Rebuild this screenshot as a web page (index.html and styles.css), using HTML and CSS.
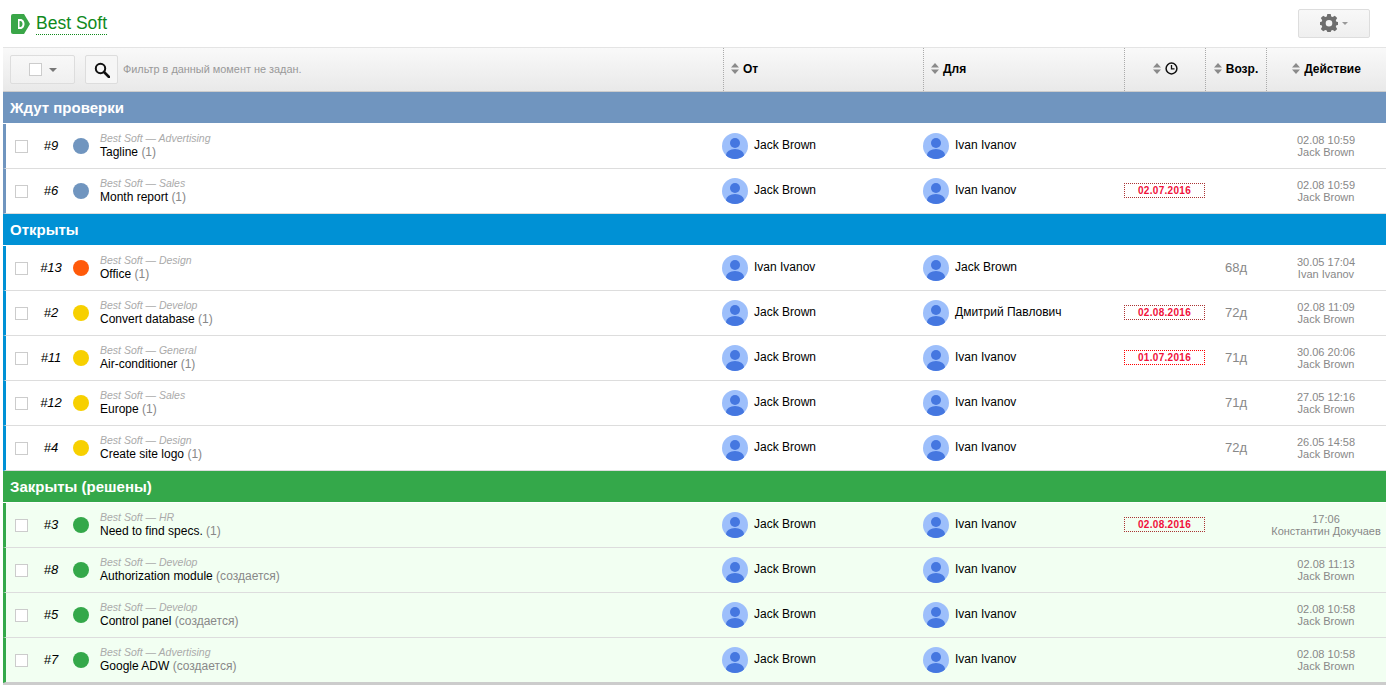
FILE: index.html
```html
<!DOCTYPE html>
<html lang="en">
<head>
    <meta charset="UTF-8">
    <title>Best Soft</title>
    <link rel="stylesheet" href="styles.css">
</head>
<body>
    <svg class="sprite" width="0" height="0">
        <symbol id="avatar" viewBox="0 0 26 26">
            <circle cx="13" cy="13" r="13" fill="#9dbffb"/>
            <clipPath id="avatarClip"><circle cx="13" cy="13" r="13"/></clipPath>
            <circle cx="13" cy="10" r="5" fill="#4577e0"/>
            <ellipse cx="13" cy="22" rx="9" ry="6" fill="#4577e0" clip-path="url(#avatarClip)"/>
        </symbol>
        <symbol id="sort" viewBox="0 0 8 11">
            <path d="M4 0 8 4.500H0zM0 6.500H8L4 11z" fill="#8a8a8a"/>
        </symbol>
    </svg>

    <header class="topbar">
        <div class="brand">
            <svg class="brand-logo" width="19" height="20" viewBox="0 0 19 20">
                <path d="M2 0H13L19 10 13 20H2Q0 20 0 18V2Q0 0 2 0z" fill="#3aa648"/>
                <path d="M7 5H9.500C12 5 13.500 7.500 13.500 10S12 15 9.500 15H7z" fill="#fff"/>
                <path d="M8.500 7H9.300C10.700 7 11.500 8.500 11.500 10S10.700 13 9.300 13H8.500z" fill="#3aa648"/>
            </svg>
            <a class="brand-name" href="#">Best Soft</a>
        </div>
        <button class="settings-button">
            <svg width="18" height="18" viewBox="0 0 18 18">
                <path fill-rule="evenodd" fill="#6e6e6e" d="M7.300 0H10.700L11.200 2.500 12.700 3.100 14.800 1.700 17.200 4.100 15.800 6.200 16.400 7.700 18 8V11L16.400 11.300 15.800 12.800 17.200 14.900 14.800 17.300 12.700 15.900 11.200 16.500 10.700 18H7.300L6.800 16.500 5.300 15.900 3.200 17.300 .8 14.900 2.200 12.800 1.600 11.300 0 11V8L1.600 7.700 2.200 6.200 .8 4.100 3.200 1.700 5.300 3.100 6.800 2.500zM9 6A3.300 3.300 0 1 0 9 12.600 3.300 3.300 0 1 0 9 6z"/>
            </svg>
            <span class="caret caret-light"></span>
        </button>
    </header>

    <main class="board">
        <div class="toolbar grid">
            <div class="filter-cell">
                <button class="tool-button select-button"><span class="check"></span><span class="caret"></span></button>
                <button class="tool-button search-button">
                    <svg width="16" height="16" viewBox="0 0 16 16">
                        <circle cx="6.500" cy="6.500" r="4.700" fill="none" stroke="#111" stroke-width="2"/>
                        <path d="M10 10 15 15" stroke="#111" stroke-width="2.600" stroke-linecap="round"/>
                    </svg>
                </button>
                <span class="filter-text">Фильтр в данный момент не задан.</span>
            </div>
            <div class="head-cell"><svg class="sort"><use href="#sort"/></svg>От</div>
            <div class="head-cell"><svg class="sort"><use href="#sort"/></svg>Для</div>
            <div class="head-cell head-center">
                <svg class="sort"><use href="#sort"/></svg>
                <svg width="13" height="13" viewBox="0 0 13 13">
                    <circle cx="6.500" cy="6.500" r="5.400" fill="none" stroke="#111" stroke-width="1.500"/>
                    <path d="M6.500 3V6.800H9.500" fill="none" stroke="#111" stroke-width="1.300"/>
                </svg>
            </div>
            <div class="head-cell head-center"><svg class="sort"><use href="#sort"/></svg>Возр.</div>
            <div class="head-cell head-center"><svg class="sort"><use href="#sort"/></svg>Действие</div>
        </div>

        <section class="group group-check">
            <h2 class="group-title">Ждут проверки</h2>
            <div class="row grid">
                <div class="task"><span class="check"></span><span class="num">#9</span><span class="dot dot-blue"></span><div class="info"><div class="project">Best Soft — Advertising</div><div class="name">Tagline <span class="count">(1)</span></div></div></div>
                <div class="person"><svg class="avatar"><use href="#avatar"/></svg>Jack Brown</div>
                <div class="person"><svg class="avatar"><use href="#avatar"/></svg>Ivan Ivanov</div>
                <div class="due"></div>
                <div class="age"></div>
                <div class="action">02.08 10:59<b>Jack Brown</b></div>
            </div>
            <div class="row grid">
                <div class="task"><span class="check"></span><span class="num">#6</span><span class="dot dot-blue"></span><div class="info"><div class="project">Best Soft — Sales</div><div class="name">Month report <span class="count">(1)</span></div></div></div>
                <div class="person"><svg class="avatar"><use href="#avatar"/></svg>Jack Brown</div>
                <div class="person"><svg class="avatar"><use href="#avatar"/></svg>Ivan Ivanov</div>
                <div class="due"><span class="date-box">02.07.2016</span></div>
                <div class="age"></div>
                <div class="action">02.08 10:59<b>Jack Brown</b></div>
            </div>
        </section>

        <section class="group group-open">
            <h2 class="group-title">Открыты</h2>
            <div class="row grid">
                <div class="task"><span class="check"></span><span class="num">#13</span><span class="dot dot-orange"></span><div class="info"><div class="project">Best Soft — Design</div><div class="name">Office <span class="count">(1)</span></div></div></div>
                <div class="person"><svg class="avatar"><use href="#avatar"/></svg>Ivan Ivanov</div>
                <div class="person"><svg class="avatar"><use href="#avatar"/></svg>Jack Brown</div>
                <div class="due"></div>
                <div class="age">68д</div>
                <div class="action">30.05 17:04<b>Ivan Ivanov</b></div>
            </div>
            <div class="row grid">
                <div class="task"><span class="check"></span><span class="num">#2</span><span class="dot dot-yellow"></span><div class="info"><div class="project">Best Soft — Develop</div><div class="name">Convert database <span class="count">(1)</span></div></div></div>
                <div class="person"><svg class="avatar"><use href="#avatar"/></svg>Jack Brown</div>
                <div class="person"><svg class="avatar"><use href="#avatar"/></svg>Дмитрий Павлович</div>
                <div class="due"><span class="date-box">02.08.2016</span></div>
                <div class="age">72д</div>
                <div class="action">02.08 11:09<b>Jack Brown</b></div>
            </div>
            <div class="row grid">
                <div class="task"><span class="check"></span><span class="num">#11</span><span class="dot dot-yellow"></span><div class="info"><div class="project">Best Soft — General</div><div class="name">Air-conditioner <span class="count">(1)</span></div></div></div>
                <div class="person"><svg class="avatar"><use href="#avatar"/></svg>Jack Brown</div>
                <div class="person"><svg class="avatar"><use href="#avatar"/></svg>Ivan Ivanov</div>
                <div class="due"><span class="date-box date-late">01.07.2016</span></div>
                <div class="age">71д</div>
                <div class="action">30.06 20:06<b>Jack Brown</b></div>
            </div>
            <div class="row grid">
                <div class="task"><span class="check"></span><span class="num">#12</span><span class="dot dot-yellow"></span><div class="info"><div class="project">Best Soft — Sales</div><div class="name">Europe <span class="count">(1)</span></div></div></div>
                <div class="person"><svg class="avatar"><use href="#avatar"/></svg>Jack Brown</div>
                <div class="person"><svg class="avatar"><use href="#avatar"/></svg>Ivan Ivanov</div>
                <div class="due"></div>
                <div class="age">71д</div>
                <div class="action">27.05 12:16<b>Jack Brown</b></div>
            </div>
            <div class="row grid">
                <div class="task"><span class="check"></span><span class="num">#4</span><span class="dot dot-yellow"></span><div class="info"><div class="project">Best Soft — Design</div><div class="name">Create site logo <span class="count">(1)</span></div></div></div>
                <div class="person"><svg class="avatar"><use href="#avatar"/></svg>Jack Brown</div>
                <div class="person"><svg class="avatar"><use href="#avatar"/></svg>Ivan Ivanov</div>
                <div class="due"></div>
                <div class="age">72д</div>
                <div class="action">26.05 14:58<b>Jack Brown</b></div>
            </div>
        </section>

        <section class="group group-closed">
            <h2 class="group-title">Закрыты (решены)</h2>
            <div class="row grid">
                <div class="task"><span class="check"></span><span class="num">#3</span><span class="dot dot-green"></span><div class="info"><div class="project">Best Soft — HR</div><div class="name">Need to find specs. <span class="count">(1)</span></div></div></div>
                <div class="person"><svg class="avatar"><use href="#avatar"/></svg>Jack Brown</div>
                <div class="person"><svg class="avatar"><use href="#avatar"/></svg>Ivan Ivanov</div>
                <div class="due"><span class="date-box">02.08.2016</span></div>
                <div class="age"></div>
                <div class="action">17:06<b>Константин Докучаев</b></div>
            </div>
            <div class="row grid">
                <div class="task"><span class="check"></span><span class="num">#8</span><span class="dot dot-green"></span><div class="info"><div class="project">Best Soft — Develop</div><div class="name">Authorization module <span class="count">(создается)</span></div></div></div>
                <div class="person"><svg class="avatar"><use href="#avatar"/></svg>Jack Brown</div>
                <div class="person"><svg class="avatar"><use href="#avatar"/></svg>Ivan Ivanov</div>
                <div class="due"></div>
                <div class="age"></div>
                <div class="action">02.08 11:13<b>Jack Brown</b></div>
            </div>
            <div class="row grid">
                <div class="task"><span class="check"></span><span class="num">#5</span><span class="dot dot-green"></span><div class="info"><div class="project">Best Soft — Develop</div><div class="name">Control panel <span class="count">(создается)</span></div></div></div>
                <div class="person"><svg class="avatar"><use href="#avatar"/></svg>Jack Brown</div>
                <div class="person"><svg class="avatar"><use href="#avatar"/></svg>Ivan Ivanov</div>
                <div class="due"></div>
                <div class="age"></div>
                <div class="action">02.08 10:58<b>Jack Brown</b></div>
            </div>
            <div class="row grid">
                <div class="task"><span class="check"></span><span class="num">#7</span><span class="dot dot-green"></span><div class="info"><div class="project">Best Soft — Advertising</div><div class="name">Google ADW <span class="count">(создается)</span></div></div></div>
                <div class="person"><svg class="avatar"><use href="#avatar"/></svg>Jack Brown</div>
                <div class="person"><svg class="avatar"><use href="#avatar"/></svg>Ivan Ivanov</div>
                <div class="due"></div>
                <div class="age"></div>
                <div class="action">02.08 10:58<b>Jack Brown</b></div>
            </div>
        </section>
    </main>
</body>
</html>
```

FILE: styles.css
```css
body {
    margin: 0;
    background-color: #fff;
    color: #000;
    font-family: "Liberation Sans", Arial, sans-serif;
    font-size: 12px;
}

.sprite {
    display: block;
    height: 0;
}

.topbar {
    height: 47px;
    display: flex;
    align-items: center;
    justify-content: space-between;
    padding: 0 21px 0 11px;
    box-sizing: border-box;
}

.brand {
    display: flex;
    align-items: center;
    gap: 6px;
    margin-top: 1px;
}

.brand-name {
    color: #108a1c;
    font-size: 17.500px;
    line-height: 21px;
    text-decoration: none;
    border-bottom: 1px dotted #108a1c;
}

.settings-button {
    width: 72px;
    height: 29px;
    margin-top: -1px;
    display: flex;
    align-items: center;
    justify-content: center;
    gap: 4px;
    padding: 0;
    border: 1px solid #ddd;
    border-radius: 2px;
    background: linear-gradient(#f8f8f8, #efefef);
}

.caret {
    width: 0;
    height: 0;
    border-left: 4px solid transparent;
    border-right: 4px solid transparent;
    border-top: 4px solid #777;
}

.caret-light {
    border-left-width: 3.500px;
    border-right-width: 3.500px;
    border-top: 3px solid #999;
}

.board {
    margin: 0 5px 0 3px;
}

.grid {
    display: grid;
    grid-template-columns: 720px 200px 201px 81px 61px 120px;
}

.toolbar {
    height: 45px;
    box-sizing: border-box;
    border-top: 1px solid #e4e4e4;
    border-bottom: 1px solid #ccc;
    background: linear-gradient(#f9f9f9, #e9e9e9);
}

.filter-cell {
    display: flex;
    align-items: center;
    padding-left: 7px;
}

.tool-button {
    height: 29px;
    padding: 0;
    display: flex;
    align-items: center;
    justify-content: center;
    border: 1px solid #ddd;
    border-radius: 2px;
    background: linear-gradient(#f8f8f8, #f0f0f0);
}

.select-button {
    width: 65px;
    gap: 7px;
}

.search-button {
    width: 33px;
    margin-left: 10px;
    background: #f6f6f6;
}

.filter-text {
    margin: 0 0 2px 5px;
    color: #999;
    font-size: 10.900px;
}

.head-cell {
    display: flex;
    align-items: center;
    gap: 4px;
    padding: 0 0 2px 7px;
    border-left: 1px dotted #aaa;
    font-weight: bold;
    font-size: 12px;
}

.head-center {
    justify-content: center;
    padding-left: 0;
}

.sort {
    width: 8px;
    height: 11px;
    margin-top: -1px;
}

.group-title {
    margin: 0;
    height: 32px;
    line-height: 32px;
    box-sizing: border-box;
    border-bottom: 1px solid #fff;
    padding-left: 7px;
    color: #fff;
    font-size: 15px;
    font-weight: bold;
}

.group-check .group-title { background-color: #7095bf; }
.group-open .group-title { background-color: #0091d5; }
.group-closed .group-title { background-color: #34a84a; }

.row {
    height: 45px;
    box-sizing: border-box;
    padding-bottom: 2px;
    border-left: 3px solid;
    border-bottom: 1px solid #ddd;
    grid-template-columns: 716px 201px 201px 81px 61px 120px;
}

.group-check .row { border-left-color: #7095bf; }
.group-open .row { border-left-color: #0091d5; }
.group-closed .row { border-left-color: #34a84a; background-color: #f2fff2; }

.group-closed {
    border-bottom: 2px solid #ccc;
}

.group-closed .row:last-child {
    border-bottom-color: #ccc;
}

.task {
    display: flex;
    align-items: center;
}

.check {
    display: block;
    width: 13px;
    height: 13px;
    border: 1px solid #ccc;
    box-sizing: border-box;
    background-color: #fff;
}

.task .check {
    margin: 3px 0 0 9px;
}

.num {
    width: 36px;
    margin-left: 5px;
    text-align: center;
    font-style: italic;
    font-size: 13px;
}

.dot {
    width: 16px;
    height: 16px;
    margin: 2px 0 0 4px;
    border-radius: 50%;
}

.dot-blue { background-color: #7095bf; }
.dot-orange { background-color: #ff5a0a; }
.dot-yellow { background-color: #f7d000; }
.dot-green { background-color: #34a84a; }

.info {
    margin-left: 11px;
}

.project {
    color: #aaa;
    font-style: italic;
    font-size: 10.500px;
    line-height: 14px;
}

.name {
    line-height: 15px;
}

.count {
    color: #888;
}

.person {
    display: flex;
    align-items: center;
    gap: 6px;
}

.avatar {
    width: 26px;
    height: 26px;
    margin-top: 2px;
}

.due {
    display: flex;
    align-items: center;
}

.date-box {
    width: 81px;
    height: 15px;
    box-sizing: border-box;
    border: 1px dotted #a33;
    color: #f0103a;
    font-size: 10px;
    font-weight: bold;
    letter-spacing: 0.300px;
    line-height: 13px;
    text-align: center;
}

.date-late {
    border-color: #f00;
}

.age {
    display: flex;
    align-items: center;
    padding-left: 20px;
    color: #888;
    font-size: 13px;
}

.action {
    display: flex;
    flex-direction: column;
    align-items: center;
    justify-content: center;
    padding-top: 2px;
    color: #888;
    font-size: 11px;
    line-height: 12px;
    text-align: center;
    white-space: nowrap;
}

.action b {
    font-weight: normal;
}
```
